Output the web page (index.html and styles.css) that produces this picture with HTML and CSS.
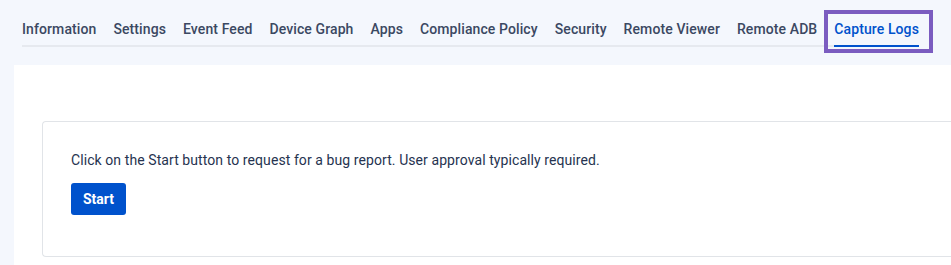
FILE: index.html
```html
<!DOCTYPE html>
<html lang="en">
<head>
  <meta charset="UTF-8" />
  <meta name="viewport" content="width=device-width, initial-scale=1.0"/>
  <title>Capture Logs</title>
  <link rel="stylesheet" href="styles.css">
</head>
<body>

 <!-- TAB DISPOSITIVO -->
 <nav class="device-tabs">
  <a class="tab">Information</a>
  <a class="tab">Settings</a>
  <a class="tab">Event Feed</a>
  <a class="tab">Device Graph</a>
  <a class="tab">Apps</a>
  <a class="tab">Compliance Policy</a>
  <a class="tab">Security</a>
  <a class="tab">Remote Viewer</a>
  <a class="tab">Remote ADB</a>
  <a class="tab active highlighted">Capture Logs</a>
 </nav>

 <div class="panel">
  <div class="capture-box">
   <p class="capture-info">Click on the Start button to request for a bug report. User approval typically required.</p>
   <button class="btn-start">Start</button>
  </div>
 </div>

</body>
</html>
```

FILE: styles.css
```css
body {
  margin: 0;
  background: #f4f7fd;
  font-family: Roboto, "Liberation Sans", Arial, sans-serif;
  color: #263350;
  overflow: hidden;
}

/* TAB */
.device-tabs {
  display: inline-flex;
  align-items: flex-end;
  gap: 17px;
  margin: 19px 0 0 22px;
  border-bottom: 2px solid #e6e9ef;
}
.tab {
  font-size: 14px;
  font-weight: 500;
  line-height: 20px;
  letter-spacing: 0.1px;
  padding-bottom: 6px;
  color: #3b4862;
  cursor: pointer;
  position: relative;
}
.tab.active {
  color: #0052cc;
  border-bottom: 2px solid #0052cc;
  margin-bottom: -2px;
}
.tab.highlighted::after {
  content: "";
  position: absolute;
  top: -9px;
  bottom: -8px;
  left: -10px;
  right: -14px;
  border: 4px solid #7b5cc0;
}

/* CONTENUTO */
.panel {
  background: white;
  margin: 18px 0 0 14px;
  height: 200px;
  padding: 56px 0 0 28px;
  box-sizing: border-box;
}
.capture-box {
  border: 1px solid #e1e4e8;
  border-right: none;
  border-radius: 4px 0 0 4px;
  padding: 28px 28px 41px 28px;
}
.capture-info {
  margin: 0 0 13px 0;
  font-size: 14px;
  line-height: 20px;
  letter-spacing: 0.08px;
}
.btn-start {
  height: 32px;
  padding: 0 12px;
  border: none;
  border-radius: 3px;
  background: #0052cc;
  color: white;
  font-family: inherit;
  font-size: 14px;
  font-weight: 700;
  cursor: pointer;
}
```
